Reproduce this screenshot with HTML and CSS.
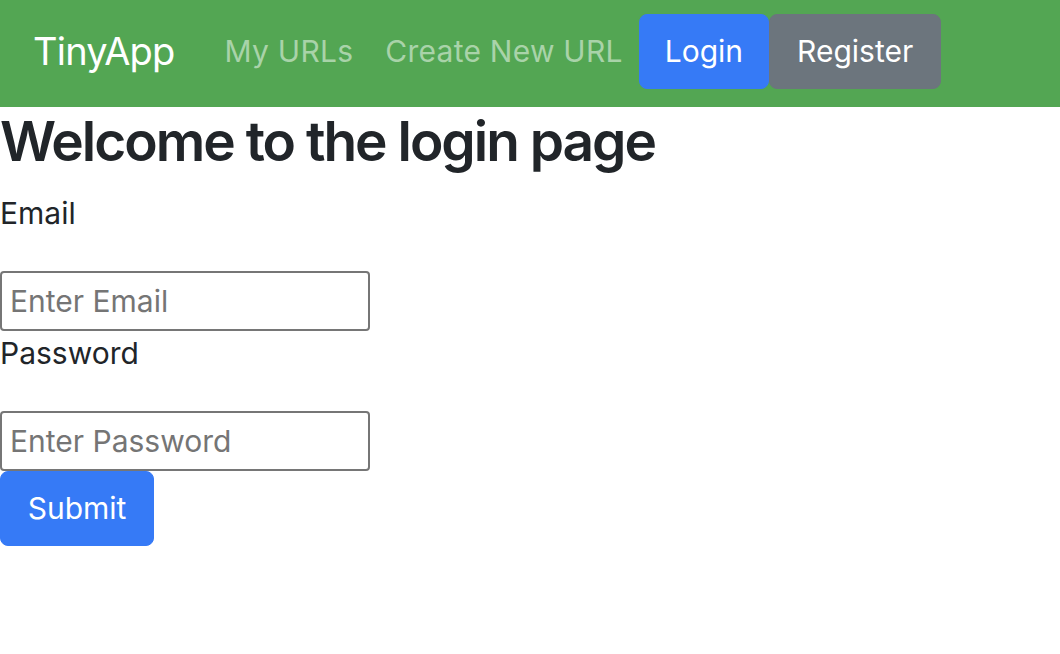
FILE: index.html
```html
<!DOCTYPE html>
<html lang="en">
<head>
<meta charset="utf-8">
<title>TinyApp - Login</title>
<link rel="stylesheet" href="styles.css">
</head>
<body>
<nav class="navbar">
  <a class="brand" href="#">TinyApp</a>
  <ul class="nav">
    <li><a class="nav-link" href="#">My URLs</a></li>
    <li><a class="nav-link" href="#">Create New URL</a></li>
  </ul>
  <div class="auth">
    <a class="btn btn-primary" href="#">Login</a>
    <a class="btn btn-secondary" href="#">Register</a>
  </div>
</nav>
<main class="page">
  <h1 class="title">Welcome to the login page</h1>
  <form class="login-form">
    <label class="field-label" for="email">Email</label>
    <input class="field-input" id="email" type="text" placeholder="Enter Email">
    <label class="field-label" for="password">Password</label>
    <input class="field-input" id="password" type="password" placeholder="Enter Password">
    <button class="btn btn-primary btn-submit" type="submit">Submit</button>
  </form>
</main>
</body>
</html>
```

FILE: styles.css
```css
* { box-sizing: border-box; }
body {
  margin: 0;
  font-family: Inter, "Noto Sans", "Liberation Sans", sans-serif;
  color: #212529;
  background: #fff;
}
a { text-decoration: none; }

.navbar {
  display: flex;
  align-items: center;
  height: 107px;
  padding: 14px 0 18px 33px;
  background: #53a653;
}
.brand {
  color: #fff;
  font-size: 38px;
  line-height: 57px;
  letter-spacing: -0.8px;
  margin-right: 34px;
}
.nav {
  display: flex;
  list-style: none;
  margin: 0;
  padding: 0;
}
.nav-link {
  display: block;
  padding: 0 16px;
  font-size: 30px;
  line-height: 45px;
  letter-spacing: 0.25px;
  color: #a9d3a9;
}
.auth { display: flex; }

.btn {
  display: inline-block;
  font-family: inherit;
  font-size: 30px;
  line-height: 45px;
  padding: 14px 26px;
  border: 1px solid transparent;
  border-radius: 8px;
  color: #fff;
  cursor: pointer;
}
.btn-primary { background: #367af6; border-color: #367af6; }
.btn-secondary { background: #6c757d; border-color: #6c757d; }
.auth .btn-primary { padding-left: 25px; padding-right: 25px; }
.auth .btn-secondary { padding-left: 27px; padding-right: 27px; }

.title {
  margin: 0 0 15px;
  font-size: 55px;
  font-weight: 600;
  line-height: 69px;
  letter-spacing: -2px;
  color: #212529;
}
.login-form {
  display: flex;
  flex-direction: column;
  align-items: flex-start;
}
.field-label {
  font-size: 30px;
  line-height: 45px;
  margin-bottom: 35px;
}
.field-input {
  width: 370px;
  height: 60px;
  padding: 0 8px;
  border: 2px solid #767676;
  border-radius: 4px;
  font-family: inherit;
  font-size: 30px;
  color: #212529;
}
.field-input::placeholder { color: #757575; }
.btn-submit { width: 154px; text-align: center; padding-left: 0; padding-right: 0; }
```
